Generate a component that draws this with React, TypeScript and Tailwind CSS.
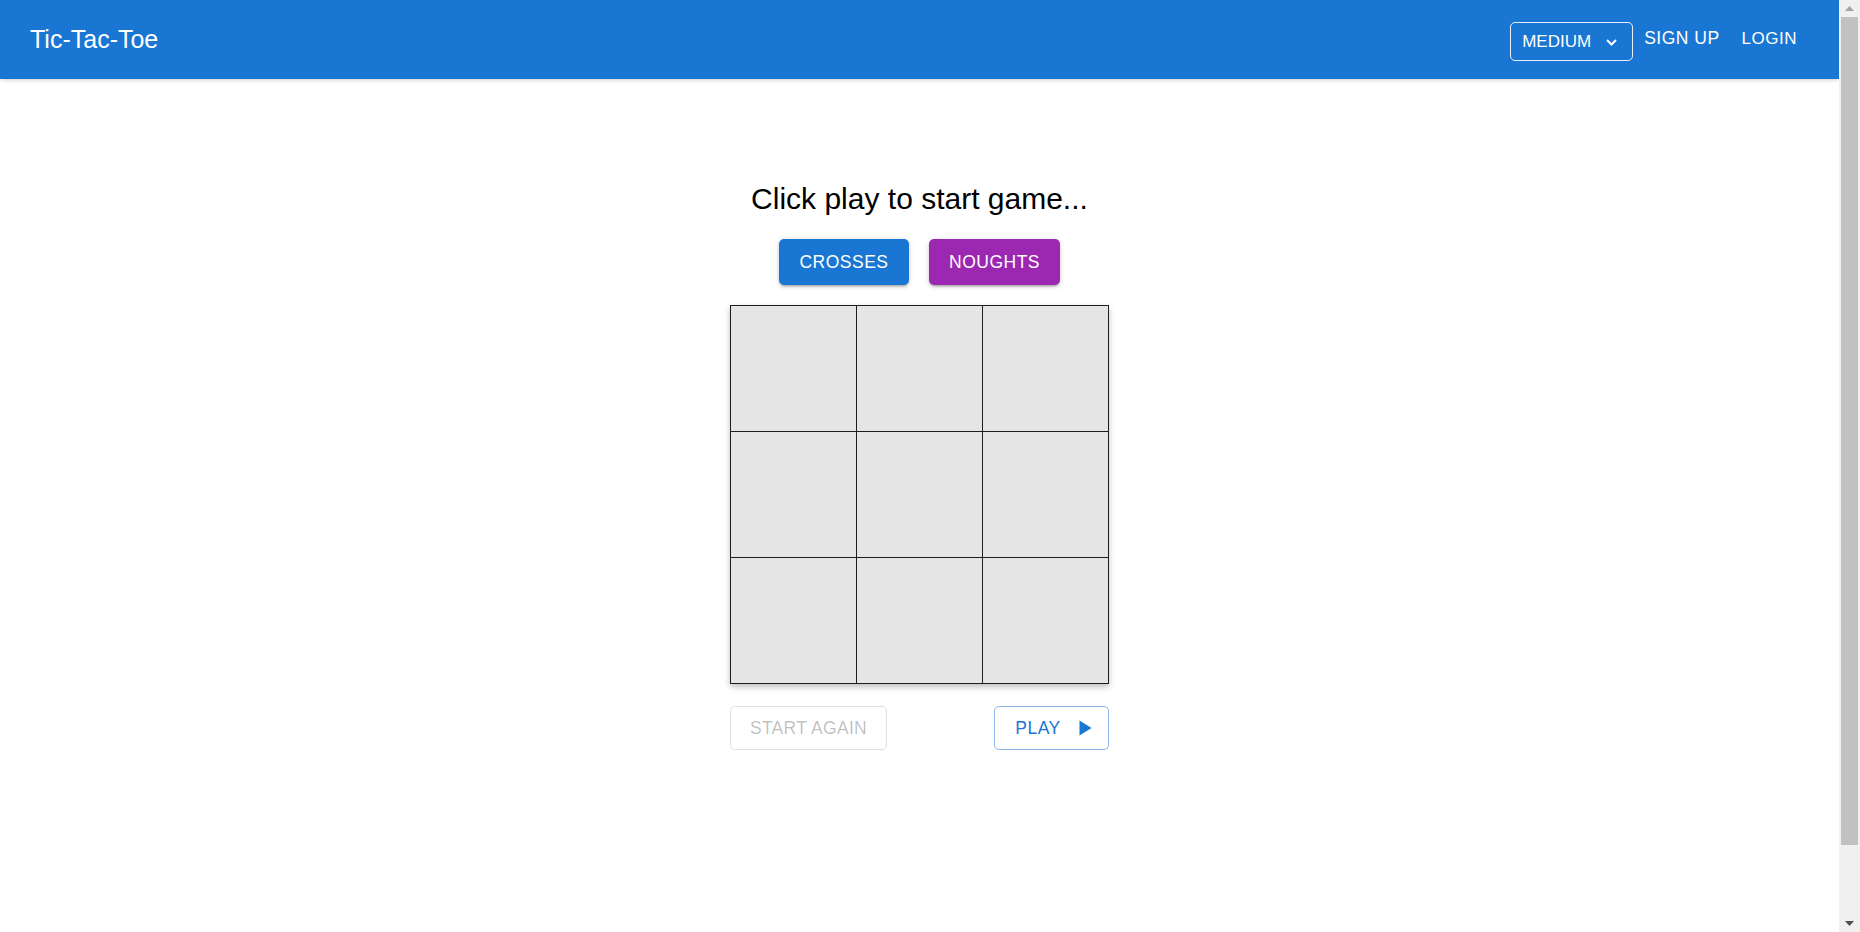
import { useState } from "react";

const font = "font-['Liberation_Sans',Arial,sans-serif]";

function Cell({ value, onClick }: { value: string; onClick: () => void }) {
  return (
    <button
      onClick={onClick}
      className="w-[125px] h-[125px] bg-[#e5e5e5] flex items-center justify-center text-[64px] text-[#222]"
    >
      {value}
    </button>
  );
}

// the page in the screenshot shows a classic window scrollbar
function Scrollbar() {
  return (
    <div className="w-[21px] h-full bg-[#f0f0f0] flex flex-col shrink-0">
      <div className="h-[17px] flex items-center justify-center">
        <svg width="9" height="5" viewBox="0 0 9 5">
          <path d="M0 5L4.5 0L9 5z" fill="#a3a3a3" />
        </svg>
      </div>
      <div className="h-[828px] mx-[2px] bg-[#c1c1c1]" />
      <div className="flex-1" />
      <div className="h-[17px] flex items-center justify-center">
        <svg width="9" height="5" viewBox="0 0 9 5">
          <path d="M0 0L4.5 5L9 0z" fill="#505050" />
        </svg>
      </div>
    </div>
  );
}

export default function App() {
  const [board, setBoard] = useState<string[]>(Array(9).fill(""));
  const [player, setPlayer] = useState<"X" | "O">("X");
  const [started, setStarted] = useState(false);

  const play = (i: number) => {
    if (!started || board[i]) return;
    const next = [...board];
    next[i] = player;
    setBoard(next);
  };

  return (
    <div className={`${font} h-screen flex bg-white text-black overflow-hidden`}>
      <div className="flex-1 min-w-0 h-full overflow-hidden">
        {/* App bar */}
        <header className="h-[79px] bg-[#1976d2] text-white flex items-center pl-[30px] pr-[32px] shadow-[0_2px_4px_-1px_rgba(0,0,0,0.2)]">
          <h1 className="flex-1 text-[25px] leading-none">Tic-Tac-Toe</h1>
          <div className="flex items-center mt-[3px]">
            <div className="w-[123px] h-[39px] border border-white/90 rounded-[5px] flex items-center pl-[11px] pr-[15px] justify-between">
              <span className="text-[17px] leading-none mt-[1px]">MEDIUM</span>
              <svg width="11" height="7" viewBox="0 0 11 7" className="mt-[2px]">
                <path d="M1 1l4.5 4.5L10 1" fill="none" stroke="white" strokeWidth="2" />
              </svg>
            </div>
            <button className="pl-[11px] pr-[10px] text-[17.5px] tracking-[0.5px] leading-none -mt-[5px]">SIGN UP</button>
            <button className="px-[10px] ml-[2px] text-[17px] tracking-[0.5px] leading-none -mt-[6px]">LOGIN</button>
          </div>
        </header>

        <main className="flex flex-col items-center pt-[102px]">
          <p className="text-[30px] leading-[36px]">Click play to start game...</p>

          <div className="flex gap-[20px] mt-[22px]">
            <button
              onClick={() => setPlayer("X")}
              className="w-[130px] h-[46px] rounded-[5px] bg-[#1976d2] text-white text-[17.5px] tracking-[0.5px] shadow-[0_3px_2px_-2px_rgba(0,0,0,0.2),0_2px_3px_0_rgba(0,0,0,0.14),0_1px_6px_0_rgba(0,0,0,0.12)]"
            >
              CROSSES
            </button>
            <button
              onClick={() => setPlayer("O")}
              className="w-[131px] h-[46px] rounded-[5px] bg-[#9c27b0] text-white text-[17.5px] tracking-[0.5px] shadow-[0_3px_2px_-2px_rgba(0,0,0,0.2),0_2px_3px_0_rgba(0,0,0,0.14),0_1px_6px_0_rgba(0,0,0,0.12)]"
            >
              NOUGHTS
            </button>
          </div>

          {/* Board */}
          <div className="mt-[20px] grid grid-cols-3 gap-px bg-[#1e1e1e] border border-[#1e1e1e] shadow-[0_3px_6px_rgba(0,0,0,0.25)]">
            {board.map((v, i) => (
              <Cell key={i} value={v} onClick={() => play(i)} />
            ))}
          </div>

          <div className="w-[379px] flex justify-between mt-[22px]">
            <button
              disabled={!started}
              onClick={() => { setBoard(Array(9).fill("")); setStarted(false); }}
              className="w-[157px] h-[44px] rounded-[5px] border border-black/[0.12] text-black/[0.26] text-[17.5px] tracking-[0.3px]"
            >
              START AGAIN
            </button>
            <button
              onClick={() => setStarted(true)}
              className="w-[115px] h-[44px] rounded-[5px] border border-[#1976d2]/50 text-[#1976d2] text-[17.5px] tracking-[0.5px] flex items-center justify-center gap-[18px] pl-[4px]"
            >
              PLAY
              <svg width="13" height="16" viewBox="0 0 13 16">
                <path d="M0.5 0.5v15L12.5 8z" fill="#1976d2" />
              </svg>
            </button>
          </div>
        </main>
      </div>
      <Scrollbar />
    </div>
  );
}
